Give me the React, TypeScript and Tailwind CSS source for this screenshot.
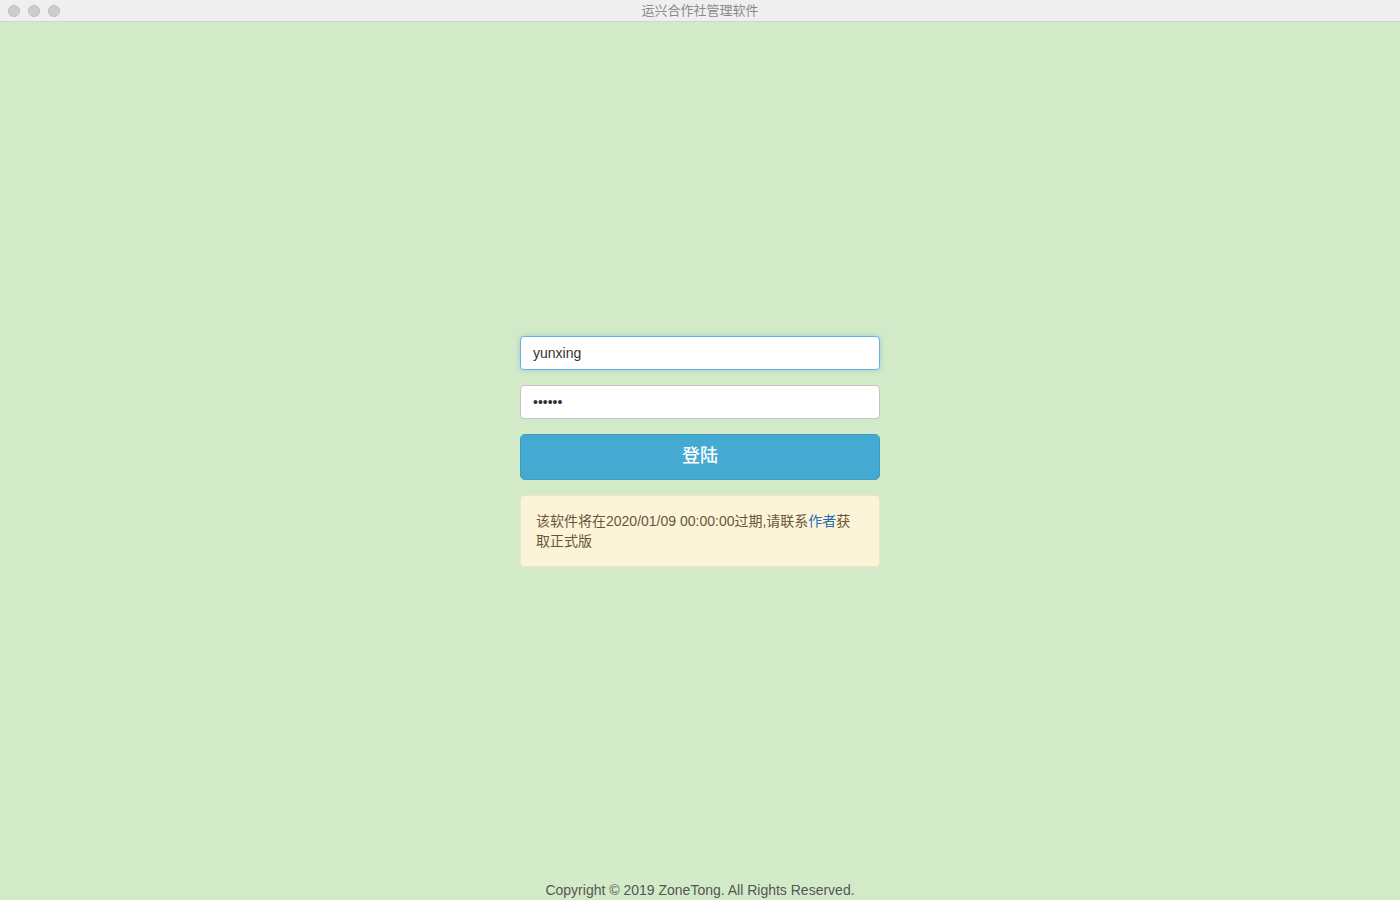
import React from 'react';

export default function App() {
  return (
    <div
      className="flex h-[900px] w-[1400px] flex-col bg-[#d3eac8]"
      style={{ fontFamily: '"Liberation Sans", "Noto Sans CJK SC", sans-serif' }}
    >
      {/* window title bar */}
      <div className="relative flex h-[22px] items-center justify-center border-b border-[#d4d4d4] bg-[#efefef]">
        <div className="absolute left-[8px] top-[5px] flex gap-[8px]">
          <span className="h-[12px] w-[12px] rounded-full border border-[#bdbdbd] bg-[#cdcdcd]" />
          <span className="h-[12px] w-[12px] rounded-full border border-[#bdbdbd] bg-[#cdcdcd]" />
          <span className="h-[12px] w-[12px] rounded-full border border-[#bdbdbd] bg-[#cdcdcd]" />
        </div>
        <span className="text-[13px] text-[#8a8a8a]">运兴合作社管理软件</span>
      </div>

      <div className="flex flex-1 items-center justify-center">
        <div className="flex w-[360px] flex-col">
          <input
            className="h-[34px] rounded-[4px] border border-[#66afe9] bg-white px-[12px] text-[14px] text-[#333] shadow-[0_0_5px_rgba(102,175,233,0.5)] outline-none"
            defaultValue="yunxing"
          />
          <input
            type="password"
            className="mt-[15px] h-[34px] rounded-[4px] border border-[#c4c4c4] bg-white px-[12px] text-[14px] text-[#333] outline-none"
            defaultValue="123456"
          />
          <button className="mt-[15px] h-[46px] rounded-[5px] border border-[#3c9dc5] bg-[#44aad2] text-[18px] font-medium text-white">
            登陆
          </button>
          <div className="mt-[15px] rounded-[4px] border border-[#f4e4bb] bg-[#fbf4d9] px-[15px] py-[15px] text-[14px] leading-[20px] text-[#6b5437]">
            该软件将在2020/01/09 00:00:00过期,请联系<span className="text-[#2a6bb0]">作者</span>获取正式版
          </div>
        </div>
      </div>

      <div className="h-[20px] text-center text-[14px] leading-[20px] text-[#555]">
        Copyright © 2019 ZoneTong. All Rights Reserved.
      </div>
    </div>
  );
}
